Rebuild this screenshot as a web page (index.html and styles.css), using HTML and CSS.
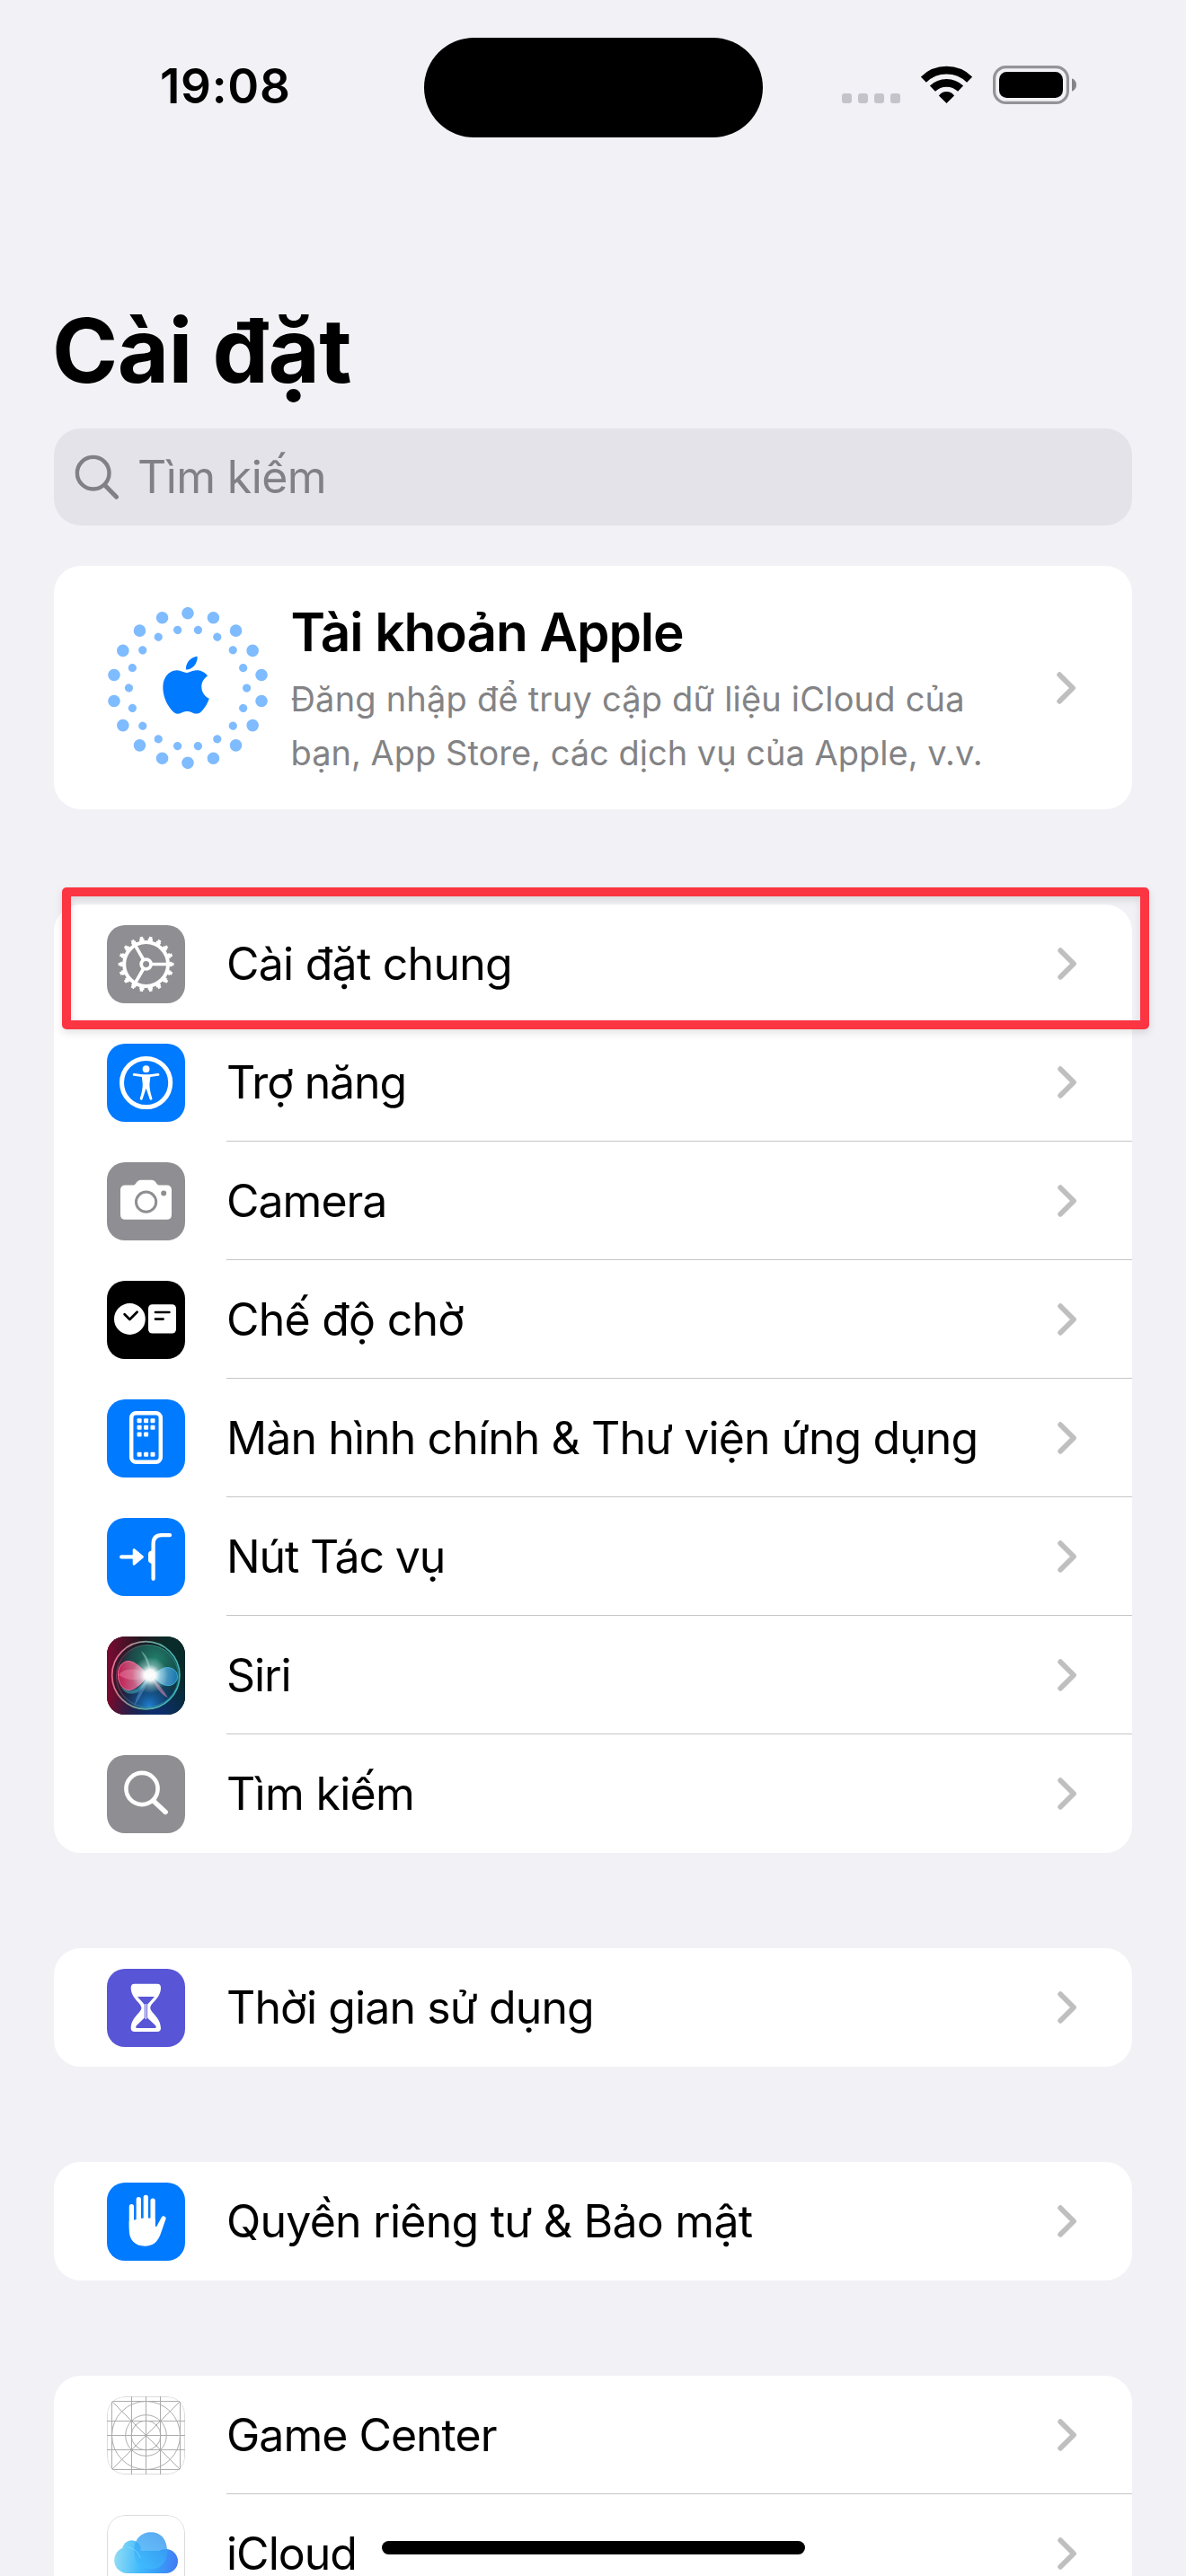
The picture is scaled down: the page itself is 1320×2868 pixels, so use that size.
FILE: index.html
```html
<!DOCTYPE html>
<html lang="vi">
<head>
<meta charset="utf-8">
<title>Cài đặt</title>
<link rel="stylesheet" href="styles.css">
</head>
<body>
<svg class="defs" width="0" height="0" aria-hidden="true">
  <symbol id="chevron" viewBox="0 0 22 36"><path d="M3.2 3.2 18 18 3.2 32.8" fill="none" stroke="#bfbfbf" stroke-width="5.8" stroke-linecap="round" stroke-linejoin="round"/></symbol>
</svg>
<div class="screen">
  <header class="status">
    <time class="clock">19:08</time>
    <div class="island"></div>
    <div class="indicators">
      <div class="signal"><i></i><i></i><i></i><i></i></div>
      <svg class="wifi" viewBox="0 0 57 42"><g fill="none" stroke="#000" stroke-width="8.6"><path d="M2.9 15.6A36.6 36.6 0 0 1 54.1 15.6"/><path d="M12.9 25.7A22.4 22.4 0 0 1 44.1 25.7"/></g><path d="M28.5 42 19.9 33.4Q23.4 29 28.5 29T37.1 33.4Z"/></svg>
      <svg class="battery" viewBox="0 0 93 43"><rect x="1.6" y="1.6" width="81.8" height="39.8" rx="13" fill="none" stroke="#949398" stroke-width="3.2"/><rect x="7" y="7" width="71" height="29" rx="8.5"/><path d="M88 14.2Q93 16.5 93 21.5T88 28.8Z" fill="#858489"/></svg>
    </div>
  </header>

  <h1 class="title">Cài đặt</h1>

  <div class="search">
    <svg class="search-icon" viewBox="0 0 50 50"><g fill="none" stroke="#808086" stroke-linecap="round"><circle cx="20.7" cy="20.7" r="17.8" stroke-width="4.4"/><path d="M34 34.5 46.5 47.3" stroke-width="5"/></g></svg>
    <span>Tìm kiếm</span>
  </div>

  <section class="card profile">
    <svg class="ring" viewBox="0 0 180 180"><g fill="none" stroke="#7fbbff" stroke-linecap="round"><circle cx="90" cy="90" r="83.3" pathLength="18" stroke-dasharray="0 1" stroke-width="13.6" transform="rotate(-90 90 90)"/><circle cx="90" cy="90" r="65.6" pathLength="18" stroke-dasharray="0 1" stroke-width="9.2" transform="rotate(-80 90 90)"/></g><path fill="#007aff" transform="translate(56.5 54.7) scale(2.63 2.667)" d="M12.152 6.896c-.948 0-2.415-1.078-3.96-1.04-2.04.027-3.91 1.183-4.961 3.014-2.117 3.675-.546 9.103 1.519 12.09 1.013 1.454 2.208 3.09 3.792 3.039 1.52-.065 2.09-.987 3.935-.987 1.831 0 2.35.987 3.96.948 1.637-.026 2.676-1.48 3.676-2.948 1.156-1.688 1.636-3.325 1.662-3.415-.039-.013-3.182-1.221-3.22-4.857-.026-3.04 2.48-4.494 2.597-4.559-1.429-2.09-3.623-2.324-4.39-2.376-2-.156-3.675 1.09-4.61 1.09zM15.53 3.83c.843-1.012 1.4-2.427 1.245-3.83-1.207.052-2.662.805-3.532 1.818-.78.896-1.454 2.338-1.273 3.714 1.338.104 2.715-.688 3.559-1.701"/></svg>
    <div class="profile-text">
      <h2>Tài khoản Apple</h2>
      <p><span class="line-one">Đăng nhập để truy cập dữ liệu iCloud của</span><br>bạn, App Store, các dịch vụ của Apple, v.v.</p>
    </div>
    <svg class="chevron"><use href="#chevron"/></svg>
  </section>

  <ul class="card group">
    <li class="row general">
      <svg class="icon gray" viewBox="0 0 87 87"><g fill="none" stroke="#fff"><circle cx="43.6" cy="43.5" r="24.4" stroke-width="4"/><circle cx="43.6" cy="43.5" r="27.3" stroke-width="3" pathLength="180" stroke-dasharray="5.6 4.4" stroke-dashoffset="2.8"/><circle cx="43.6" cy="43.5" r="29.4" stroke-width="3" pathLength="180" stroke-dasharray="3.4 6.6" stroke-dashoffset="1.7"/><circle cx="43.6" cy="43.5" r="5.4" stroke-width="3.8"/><path d="M50 43.5H67M40.4 38 31.8 23.1M40.4 49 31.8 63.9" stroke-width="3.7"/></g></svg>
      <div class="cell"><span>Cài đặt chung</span><svg class="chevron"><use href="#chevron"/></svg></div>
      <div class="highlight"></div>
    </li>
    <li class="row accessibility">
      <svg class="icon blue" viewBox="0 0 87 87"><circle cx="43.6" cy="43.5" r="27.1" fill="none" stroke="#fff" stroke-width="5"/><circle cx="43.6" cy="28.2" r="3.9" fill="#fff"/><path d="M30.2 34.4 41 35.9H46.2L57 34.4M38.2 61.2Q41.4 52 41.2 44.5L40.3 37H46.9L46 44.5Q45.8 52 49 61.2L44.4 47.5H42.8Z" fill="#fff" stroke="#fff" stroke-width="2.9" stroke-linecap="round" stroke-linejoin="round"/></svg>
      <div class="cell"><span>Trợ năng</span><svg class="chevron"><use href="#chevron"/></svg></div>
    </li>
    <li class="row camera">
      <svg class="icon gray" viewBox="0 0 87 87"><path d="M20.5 25.5H29.5C32.5 25.5 33 19.8 37.5 19.8H50C54.5 19.8 55 25.5 58 25.5H66.5Q72 25.5 72 31V58.2Q72 63.7 66.5 63.7H20.5Q15 63.7 15 58.2V31Q15 25.5 20.5 25.5Z" fill="#fff"/><circle cx="43.6" cy="44.2" r="11.1" fill="none" stroke="#8e8e93" stroke-width="3"/><circle cx="63.2" cy="34.4" r="3" fill="#8e8e93"/></svg>
      <div class="cell"><span>Camera</span><svg class="chevron"><use href="#chevron"/></svg></div>
    </li>
    <li class="row standby">
      <svg class="icon black" viewBox="0 0 87 87"><circle cx="25.4" cy="42.5" r="17.4" fill="#fff"/><rect x="46" y="26.3" width="31" height="32.3" rx="4.5" fill="#fff"/><path d="M19.6 37.2 25.4 43 33.6 34.8M54 35H69.4M54 42.6H62.6" fill="none" stroke="#000" stroke-width="2.7" stroke-linecap="round" stroke-linejoin="round"/></svg>
      <div class="cell"><span>Chế độ chờ</span><svg class="chevron"><use href="#chevron"/></svg></div>
    </li>
    <li class="row home">
      <svg class="icon blue" viewBox="0 0 87 87"><rect x="27.2" y="15.2" width="32.6" height="54.6" rx="5.2" fill="none" stroke="#fff" stroke-width="4.5"/><g fill="#fff"><rect x="33.6" y="21.2" width="5" height="5" rx="1"/><rect x="41.1" y="21.2" width="5" height="5" rx="1"/><rect x="48.5" y="21.2" width="5" height="5" rx="1"/><rect x="33.6" y="28.8" width="5" height="5" rx="1"/><rect x="41.1" y="28.8" width="5" height="5" rx="1"/><rect x="48.5" y="28.8" width="5" height="5" rx="1"/><rect x="33.6" y="36.5" width="5" height="5" rx="1"/><rect x="41.1" y="36.5" width="5" height="5" rx="1"/><rect x="33.6" y="58.8" width="5" height="5" rx="1"/><rect x="41.1" y="58.8" width="5" height="5" rx="1"/><rect x="48.5" y="58.8" width="5" height="5" rx="1"/></g></svg>
      <div class="cell"><span>Màn hình chính &amp; Thư viện ứng dụng</span><svg class="chevron"><use href="#chevron"/></svg></div>
    </li>
    <li class="row action">
      <svg class="icon blue" viewBox="0 0 87 87"><g fill="none" stroke="#fff" stroke-width="4.3" stroke-linecap="round"><path d="M16.2 43.4H30M51.6 67.8V29Q51.6 19.2 60.8 19.2H70"/></g><path d="M30.2 35.6 39.4 43.4 30.2 51.2Z" fill="#fff" stroke="#fff" stroke-width="3" stroke-linejoin="round"/><path d="M50.5 36Q46 37 46 40V47Q46 50 50.5 51Z" fill="#fff"/></svg>
      <div class="cell"><span>Nút Tác vụ</span><svg class="chevron"><use href="#chevron"/></svg></div>
    </li>
    <li class="row siri">
      <svg class="icon black" viewBox="0 0 87 87">
        <defs>
          <linearGradient id="siri-bg"><stop offset="0" stop-color="#7c0a33"/><stop offset=".42" stop-color="#24161f"/><stop offset=".75" stop-color="#0a2c29"/><stop offset="1" stop-color="#072a2a"/></linearGradient>
          <radialGradient id="siri-navy" cx=".62" cy="1.05" r=".6"><stop offset="0" stop-color="#0c2f78"/><stop offset="1" stop-color="#0c2f78" stop-opacity="0"/></radialGradient>
          <linearGradient id="siri-ring" x1="0" y1=".4" x2="1" y2=".6"><stop offset="0" stop-color="#ee6f8c"/><stop offset=".5" stop-color="#63a795"/><stop offset="1" stop-color="#37b8c0"/></linearGradient>
          <radialGradient id="siri-green" cx=".62" cy=".25" r=".65"><stop offset="0" stop-color="#23806a"/><stop offset=".6" stop-color="#1a5f58" stop-opacity=".7"/><stop offset="1" stop-color="#1c5058" stop-opacity="0"/></radialGradient>
          <radialGradient id="siri-blue" cx=".55" cy=".95" r=".5"><stop offset="0" stop-color="#1f7fd0"/><stop offset="1" stop-color="#0b3c74" stop-opacity="0"/></radialGradient>
          <linearGradient id="siri-pink"><stop offset="0" stop-color="#e01f5c"/><stop offset="1" stop-color="#f2a9c0"/></linearGradient>
          <linearGradient id="siri-lobe"><stop offset="0" stop-color="#bfe9ff"/><stop offset="1" stop-color="#1885d2"/></linearGradient>
          <radialGradient id="siri-glow"><stop offset="0" stop-color="#fff"/><stop offset=".3" stop-color="#fff" stop-opacity=".95"/><stop offset=".6" stop-color="#dff" stop-opacity=".38"/><stop offset="1" stop-color="#dff" stop-opacity="0"/></radialGradient>
        </defs>
        <rect width="87" height="87" fill="url(#siri-bg)"/><rect width="87" height="87" fill="url(#siri-navy)"/>
        <circle cx="43.3" cy="43.3" r="37" fill="#0c2430" fill-opacity=".5"/><circle cx="46" cy="43" r="34" fill="url(#siri-green)"/><circle cx="43.3" cy="43.3" r="37.5" fill="url(#siri-blue)"/>
        <path d="M47 43C57 40 61 34 68 34.5C75 35 79 40 78.5 46C77 53 71 56 64 54C57 52 53 45 47 43Z" fill="url(#siri-lobe)" fill-opacity=".75" stroke="#49b9e6" stroke-width=".8"/>
        <path d="M47 43C39 37 32 27 23 27.5C14 29 11 38 13 48C15 57 22 62 29 58.5C37 55 41 48 47 43Z" fill="url(#siri-pink)" fill-opacity=".82" stroke="#f26a94"/>
        <path d="M13 43C19 34 38 35 47 43C38 50 24 50 13 43Z" fill="#ff9bb8" fill-opacity=".35"/>
        <path d="M14 54Q21 68 35 62Q43 55 48 43Q38 58 28 60Q19 61 14 54Z" fill="#48bac4" fill-opacity=".5"/>
        <path d="M48 43Q59 54 68 68Q58 65 48 43Z" fill="#e58ab5" fill-opacity=".55"/>
        <path d="M30 78Q36 55 48 43Q43 60 30 78Z" fill="#7eb9ff" fill-opacity=".35"/>
        <path d="M48 43Q49 24 38 16Q47 32 48 43Z" fill="#a9d9cc" fill-opacity=".5"/>
        <circle cx="48" cy="43" r="20" fill="url(#siri-glow)"/>
        <circle cx="43.3" cy="43.3" r="37.6" fill="none" stroke="url(#siri-ring)" stroke-width="1.7"/><circle cx="45" cy="44" r="34.5" fill="none" stroke="url(#siri-ring)" stroke-opacity=".4"/>
      </svg>
      <div class="cell"><span>Siri</span><svg class="chevron"><use href="#chevron"/></svg></div>
    </li>
    <li class="row find">
      <svg class="icon gray" viewBox="0 0 87 87"><g fill="none" stroke="#fff" stroke-linecap="round"><circle cx="39" cy="37.5" r="17.6" stroke-width="4.6"/><path d="M52 51.2 65.2 63.5" stroke-width="5.4"/></g></svg>
      <div class="cell"><span>Tìm kiếm</span><svg class="chevron"><use href="#chevron"/></svg></div>
    </li>
  </ul>

  <ul class="card group">
    <li class="row screentime">
      <svg class="icon indigo" viewBox="0 0 87 87"><path d="M30.7 16.7H56Q60 16.7 60 21C60 33 48.3 38 48.3 43.4S60 54 60 66Q60 70 56 70H30.7Q26.7 70 26.7 66C26.7 54 38.4 48.8 38.4 43.4S26.7 33 26.7 21Q26.7 16.7 30.7 16.7Z" fill="#fff"/><path d="M34 31H53L45 39.8V54.5L54 63Q56 66 53 66H33.7Q31 66 33 63L41.8 54.5V39.8Z" fill="#5856d6"/><path d="M43.4 39V56" stroke="#fff" stroke-width="1.2"/></svg>
      <div class="cell"><span>Thời gian sử dụng</span><svg class="chevron"><use href="#chevron"/></svg></div>
    </li>
  </ul>

  <ul class="card group">
    <li class="row privacy">
      <svg class="icon blue" viewBox="0 0 87 87"><g stroke="#fff" stroke-width="5.3" stroke-linecap="round"><path d="M27.4 26.7V50M35.3 18.6V50M43.3 16.4V50M51.1 20.2V50"/></g><path d="M24.75 43 31 41.5 38 39.8 47 39.5 53.75 40.5V49H55.2L60.9 38.5A2.6 2.6 0 0 1 65.7 40L60.5 55C57 66.5 51 70.7 42.3 70.7C31 70.7 24.75 63.5 24.75 53Z" fill="#fff"/></svg>
      <div class="cell"><span>Quyền riêng tư &amp; Bảo mật</span><svg class="chevron"><use href="#chevron"/></svg></div>
    </li>
  </ul>

  <ul class="card group">
    <li class="row game">
      <svg class="icon" viewBox="0 0 87 87"><rect x=".5" y=".5" width="86" height="86" rx="19.5" fill="#fff" stroke="#dcdcdc"/><g fill="none" stroke="#acacac"><rect x="5.5" y="5.5" width="76" height="76"/><circle cx="43.5" cy="43.5" r="38"/><circle cx="43.5" cy="43.5" r="22.8"/><circle cx="43.5" cy="43.5" r="16.4"/><path d="M5.5 5.5 81.5 81.5M81.5 5.5 5.5 81.5M27.5 0V87M43.5 0V87M59.5 0V87M0 27.5H87M0 43.5H87M0 59.5H87"/></g></svg>
      <div class="cell"><span>Game Center</span><svg class="chevron"><use href="#chevron"/></svg></div>
    </li>
    <li class="row icloud">
      <svg class="icon" viewBox="0 0 87 87"><defs><linearGradient id="cloud" gradientUnits="userSpaceOnUse" x1="8" y1="48" x2="79" y2="54"><stop offset="0" stop-color="#92dcf4"/><stop offset=".42" stop-color="#3fb9fd"/><stop offset=".7" stop-color="#389df8"/><stop offset="1" stop-color="#4479f5"/></linearGradient><linearGradient id="cloud-top" x1="0" y1="1" x2=".6" y2="0"><stop offset="0" stop-color="#43c0ff"/><stop offset="1" stop-color="#3397ef"/></linearGradient></defs><rect x=".5" y=".5" width="86" height="86" rx="19.5" fill="#fff" stroke="#dcdcdc"/><g fill="url(#cloud)"><circle cx="22.8" cy="50.4" r="14.6"/><circle cx="27.5" cy="38.5" r="10.2"/><rect x="22" y="40" width="44" height="25"/><circle cx="65.5" cy="51.5" r="13.5"/></g><path d="M31 46C28 30 36 19.3 49 19.3C62 19.3 68 30 67 44Q64 60 50 60Q33 60 31 46Z" fill="url(#cloud-top)" fill-opacity=".8"/><path d="M24 36Q34 38 37 48" fill="none" stroke="#a0e4ff" stroke-opacity=".5"/></svg>
      <div class="cell"><span>iCloud</span><svg class="chevron"><use href="#chevron"/></svg></div>
    </li>
  </ul>
  <div class="home-indicator"></div>
</div>
</body>
</html>
```
FILE: styles.css
```css
* { box-sizing: border-box; margin: 0; padding: 0; }

body {
  background: #f2f1f6;
  color: #000;
  font-family: Inter, "Liberation Sans", sans-serif;
}

.defs { display: block; height: 0; }

.screen {
  position: relative;
  width: 1320px;
  height: 2868px;
  overflow: hidden;
}

/* Status bar */
.status {
  display: grid;
  grid-template-columns: 471.5px 377px 1fr;
  height: 330px;
  padding-top: 41.5px;
  align-items: start;
}
.clock {
  padding: 22px 0 0 178px;
  font-size: 53px;
  font-weight: 600;
  line-height: 64px;
  letter-spacing: .7px;
}
.island { height: 111px; border-radius: 55.5px; background: #000; }
.indicators {
  display: flex;
  align-items: flex-end;
  padding: 31.5px 0 0 88.5px;
}
.signal { display: flex; gap: 7px; padding-bottom: 1px; }
.signal i { width: 11px; height: 11px; border-radius: 3px; background: #c4c3c9; }
.wifi { width: 57px; height: 42px; margin: 0 23px 1px; }
.battery { width: 93px; height: 43px; }

.title {
  padding-left: 58px;
  height: 147px;
  font-size: 99px;
  font-weight: 700;
  line-height: 120px;
  letter-spacing: -.6px;
}

.search {
  display: flex;
  align-items: center;
  gap: 21px;
  width: 1200px;
  height: 108px;
  margin: 0 60px 45px;
  padding-left: 23px;
  border-radius: 30px;
  background: #e4e3e9;
  color: #808086;
  font-size: 50px;
  letter-spacing: -.6px;
}
.search-icon { width: 50px; height: 50px; margin-right: -1px; }

.card {
  width: 1200px;
  margin: 0 60px 106px;
  border-radius: 30px;
  background: #fff;
  list-style: none;
}

.profile {
  display: flex;
  align-items: center;
  height: 271px;
  padding: 0 62px 0 58.5px;
}
.ring { width: 180px; height: 180px; }
.profile-text { flex: 1; padding: 5px 0 0 25px; }
.profile-text h2 {
  margin-bottom: 8px;
  font-size: 58.5px;
  font-weight: 600;
  line-height: 72px;
  letter-spacing: -1.05px;
}
.profile-text p {
  color: #838385;
  font-size: 38px;
  line-height: 60px;
  white-space: nowrap;
}
.line-one { letter-spacing: .2px; }
.chevron { display: block; flex: none; width: 22px; height: 36px; }

.row {
  position: relative;
  display: flex;
  align-items: center;
  gap: 46px;
  height: 132px;
  padding-left: 59px;
  font-size: 50px;
  letter-spacing: -.9px;
}
.cell {
  display: flex;
  flex: 1;
  align-items: center;
  justify-content: space-between;
  height: 100%;
  padding-right: 61.5px;
  white-space: nowrap;
}
.row:not(:last-child) .cell { box-shadow: inset 0 -1px #c6c6c8; }

.general, .standby, .privacy { letter-spacing: -.76px; }
.accessibility, .action { letter-spacing: -1.15px; }
.camera, .game, .icloud { letter-spacing: -1px; }
.siri { letter-spacing: -1.1px; }
.find { letter-spacing: -.7px; }

.icon { flex: none; width: 87px; height: 87px; border-radius: 20px; }
.gray { background: #8e8e93; }
.blue { background: #007aff; }
.black { background: #000; }
.indigo { background: #5856d6; }

/* Callout frame around the first row */
.highlight {
  position: absolute;
  top: -19px;
  left: 8.5px;
  width: 1210.5px;
  height: 158px;
  border: 10px solid #fb3542;
  border-radius: 5px;
  filter: drop-shadow(0 4px 4px rgba(0, 0, 0, .11));
  z-index: 1;
}

.home-indicator {
  position: absolute;
  top: 2829px;
  left: 425px;
  width: 471px;
  height: 15px;
  border-radius: 7.5px;
  background: #000;
}
```
